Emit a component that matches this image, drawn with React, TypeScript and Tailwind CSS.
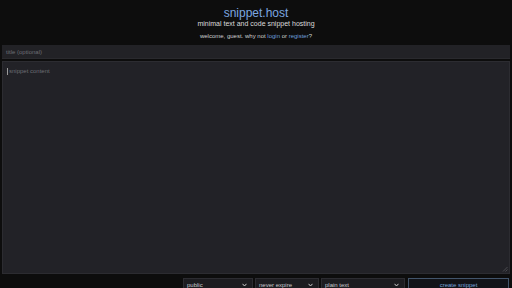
import React from "react";

function Chevron() {
  return (
    <svg width="5" height="4" viewBox="0 0 5 4" className="absolute right-[5px] top-[4px]">
      <path d="M0.5 0.8 L2.5 3 L4.5 0.8" stroke="#c8c8c8" strokeWidth="1" fill="none" />
    </svg>
  );
}

function Sel({ w, label }: { w: string; label: string }) {
  return (
    <div className={`relative ${w} h-[14px] bg-[#1c1c20] border border-[#2c2c31] text-[6px] leading-[12px] text-[#c9c9cc] pl-[3px]`}>
      {label}
      <Chevron />
    </div>
  );
}

export default function App() {
  return (
    <div className="w-[512px] h-[288px] overflow-hidden bg-[#0d0d0d] flex flex-col font-['Liberation_Sans',Arial,sans-serif]">
      <div className="shrink-0 pt-[6px] flex flex-col items-center">
        <div className="text-[12px] leading-[14px] text-[#7ba7e0]">snippet.host</div>
        <div className="text-[7px] leading-[8px] text-[#dcdcdc]">minimal text and code snippet hosting</div>
        <div className="mt-[4px] text-[6px] leading-[8px] text-[#d0d0d0]">
          welcome, guest. why not <span className="text-[#6f9fdc]">login</span> or{" "}
          <span className="text-[#6f9fdc]">register</span>?
        </div>
      </div>
      <div className="shrink-0 mt-[5px] mx-[2px] h-[14px] bg-[#222226] border-b border-[#2a2a2e] pl-[4px] text-[6px] leading-[14px] text-[#6e6e74]">
        title (optional)
      </div>
      <div className="shrink-0 relative mt-[2px] mx-[2px] h-[213px] bg-[#222227] border border-[#2c2c31] pl-[4px] pt-[5px] text-[6px] leading-[8px] text-[#6e6e74]">
        <span className="inline-block w-[1px] h-[7px] bg-[#9a9a9a] align-middle mr-[1px]"></span>snippet content
        <svg width="6" height="6" viewBox="0 0 6 6" className="absolute right-[1px] bottom-[1px]">
          <path d="M5.5 1 L1 5.5 M5.5 3.5 L3.5 5.5" stroke="#55555a" strokeWidth="0.8" />
        </svg>
      </div>
      <div className="shrink-0 mt-[4px] flex justify-end gap-[2px] pr-[3px]">
        <Sel w="w-[70px]" label="public" />
        <Sel w="w-[64px]" label="never expire" />
        <Sel w="w-[84px]" label="plain text" />
        <div className="ml-[1px] w-[101px] h-[14px] border border-[#42546a] bg-[#111318] text-[6px] leading-[12px] text-[#7aa4d8] text-center">
          create snippet
        </div>
      </div>
    </div>
  );
}
